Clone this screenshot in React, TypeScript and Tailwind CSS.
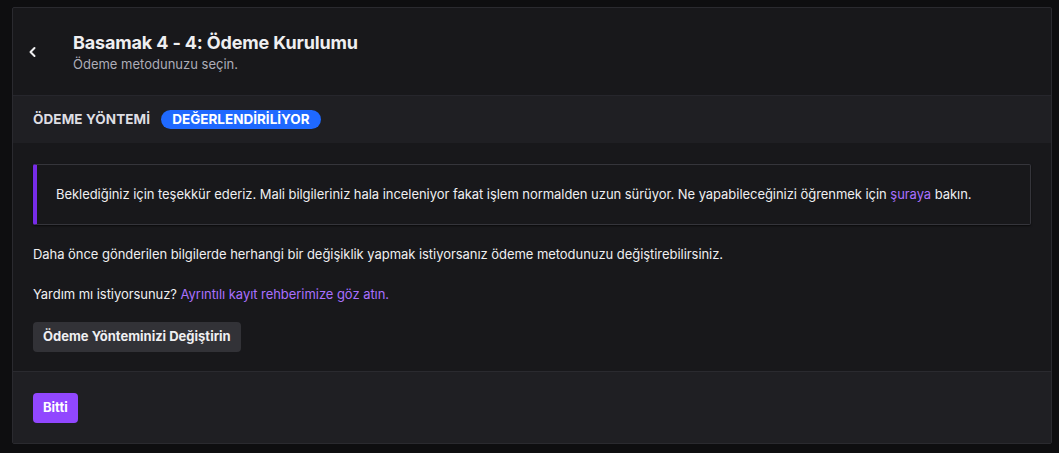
import React from "react";

export default function App() {
  return (
    <div
      className="h-[453px] w-[1059px] bg-[#0e0e10] pl-[12px] pr-[7px] pt-[7px] text-[#efeff1]"
      style={{ fontFamily: "Inter, 'Noto Sans', sans-serif" }}
    >
      <div className="flex h-[437px] flex-col overflow-hidden rounded-[2px] border border-[#2a2a2f] bg-[#18181b]">
        {/* header */}
        <div className="flex h-[87px] shrink-0 items-center">
          <div className="flex w-[60px] items-center pl-[14px]">
            <svg width="12" height="12" viewBox="0 0 12 12" fill="none">
              <path d="M7.5 2 L3.5 6 L7.5 10" stroke="#efeff1" strokeWidth="2" strokeLinecap="round" strokeLinejoin="round" />
            </svg>
          </div>
          <div className="flex flex-col">
            <div className="text-[18px] font-bold leading-[24px] tracking-[-0.15px] text-[#efeff1]">Basamak 4 - 4: Ödeme Kurulumu</div>
            <div className="text-[13px] leading-[18px] text-[#adadb8]">Ödeme metodunuzu seçin.</div>
          </div>
        </div>
        {/* section bar */}
        <div className="flex h-[48px] shrink-0 items-center gap-[11px] border-t border-[#26262c] bg-[#1f1f23] px-[20px]">
          <span className="text-[13.5px] font-bold tracking-[0.1px] text-[#dedee3]">ÖDEME YÖNTEMİ</span>
          <span className="rounded-full bg-[#1f69ff] px-[11px] text-[13.5px] font-bold leading-[19px] text-white">DEĞERLENDİRİLİYOR</span>
        </div>
        {/* body */}
        <div className="flex flex-1 flex-col px-[20px] pt-[21px]">
          <div className="flex h-[61px] items-center rounded-[2px] border border-[#35353b] border-l-[4px] border-l-[#772ce8] bg-[#18181b] pl-[19px] shadow-[0_1px_2px_rgba(0,0,0,0.6)]">
            <p className="text-[13px] tracking-[-0.05px] text-[#efeff1]">
              Beklediğiniz için teşekkür ederiz. Mali bilgileriniz hala inceleniyor fakat işlem normalden uzun sürüyor. Ne yapabileceğinizi öğrenmek için{" "}
              <span className="text-[#a970ff]">şuraya</span> bakın.
            </p>
          </div>
          <p className="mt-[20px] text-[13px] leading-[18px] tracking-[-0.05px] text-[#efeff1]">
            Daha önce gönderilen bilgilerde herhangi bir değişiklik yapmak istiyorsanız ödeme metodunuzu değiştirebilirsiniz.
          </p>
          <p className="mt-[22px] text-[13px] leading-[18px] tracking-[-0.05px] text-[#efeff1]">
            Yardım mı istiyorsunuz? <span className="text-[#a970ff]">Ayrıntılı kayıt rehberimize göz atın.</span>
          </p>
          <div className="mt-[19px]">
            <button className="h-[30px] rounded-[4px] bg-[#323237] px-[10px] text-[13px] font-bold text-[#efeff1]">
              Ödeme Yönteminizi Değiştirin
            </button>
          </div>
        </div>
        {/* footer */}
        <div className="flex h-[72px] shrink-0 items-center border-t border-[#2a2a2f] bg-[#1f1f23] px-[20px]">
          <button className="h-[30px] rounded-[4px] bg-[#9147ff] px-[10px] text-[13px] font-bold text-white">Bitti</button>
        </div>
      </div>
    </div>
  );
}
